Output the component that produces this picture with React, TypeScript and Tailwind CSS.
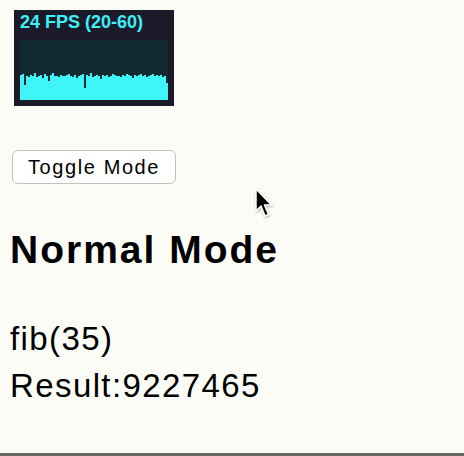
import React from 'react';

// stats.js style FPS history (cyan bar heights in px, graph is 60px tall)
const FPS_BARS = [
  25, 26, 15, 24, 23, 25, 24, 27, 23, 24, 25, 22, 26, 24, 19, 25, 27, 24, 24, 23,
  25, 24, 24, 25, 26, 24, 23, 25, 22, 24, 25, 26, 12, 25, 24, 27, 23, 24, 25, 24,
  21, 25, 24, 25, 23, 24, 26, 25, 24, 24, 23, 25, 24, 26, 25, 24, 22, 25, 24, 25,
  26, 24, 25, 23, 24, 25, 26, 24, 25, 24, 25, 23, 24, 17,
];

const FpsPanel: React.FC = () => (
  <div className="ml-[14px] mt-[10px] w-[160px] h-[96px] bg-[#1a1a28] flex flex-col">
    <div className="h-[30px] pl-[6px] pt-[3px] text-[18px] leading-none font-bold text-[#3ff0f7]">
      24 FPS (20-60)
    </div>
    <div className="ml-[6px] w-[148px] h-[60px] bg-[#142a32] flex items-end">
      {FPS_BARS.map((h, i) => (
        <div key={i} className="w-[2px] bg-[#3ff5f8]" style={{ height: h }} />
      ))}
    </div>
  </div>
);

const Cursor: React.FC = () => (
  <svg className="absolute left-[252px] top-[185px]" width="26" height="36" viewBox="0 0 26 36">
    <defs>
      <filter id="cursor-shadow" x="-30%" y="-30%" width="160%" height="160%">
        <feDropShadow dx="0.5" dy="1" stdDeviation="1" floodColor="#000" floodOpacity="0.35" />
      </filter>
    </defs>
    <path
      d="M4 4 L4 26 L9 21 L13 31 L16.5 29.5 L12.5 20 L19.5 20 Z"
      fill="#000"
      stroke="#fff"
      strokeWidth="1.5"
      strokeLinejoin="round"
      filter="url(#cursor-shadow)"
    />
  </svg>
);

export default function App() {
  return (
    <div className="relative w-[464px] h-[456px] overflow-hidden bg-[#fcfcf6] border-b-[3px] border-[#666666] font-['Liberation_Sans',Arial,sans-serif] text-black">
      <FpsPanel />

      <div className="pl-[10px]">
        <button className="ml-[2px] mt-[44px] w-[164px] h-[34px] rounded-[6px] border border-[#c4c4b4] bg-white text-[20px] leading-none tracking-[1.6px] text-black">
          Toggle Mode
        </button>

        <h1 className="mt-[46px] text-[39px] leading-none font-bold tracking-[2px]">Normal Mode</h1>

        <p className="mt-[53px] text-[33px] leading-none tracking-[1.4px]">fib(35)</p>
        <p className="mt-[14px] text-[33px] leading-none tracking-[1.4px]">Result:9227465</p>
      </div>

      <Cursor />
    </div>
  );
}
